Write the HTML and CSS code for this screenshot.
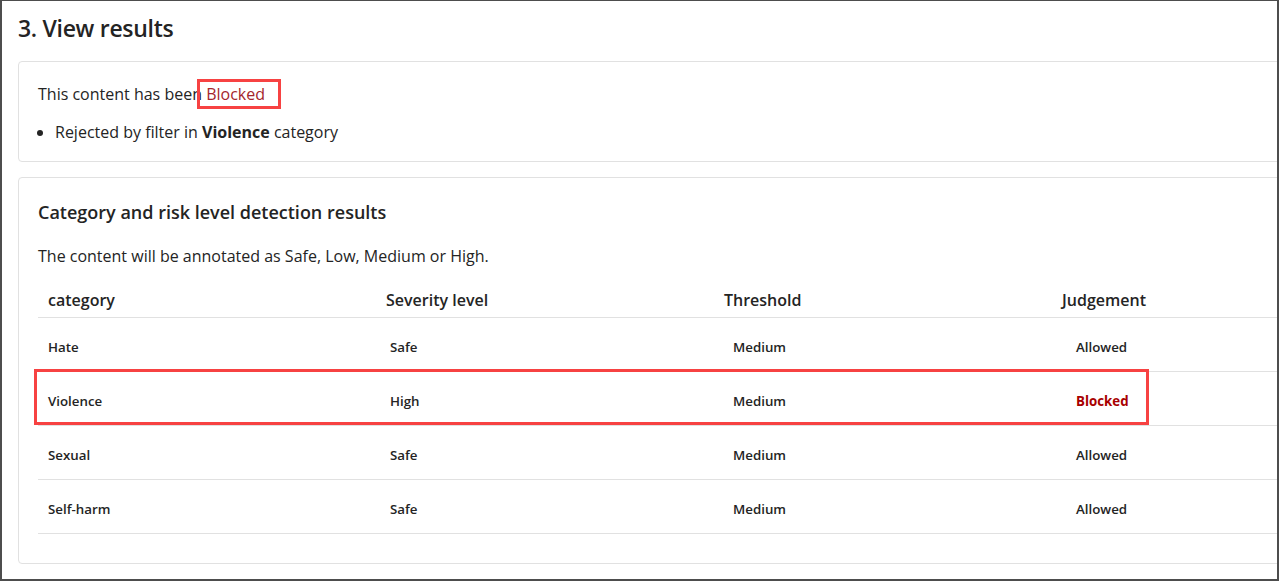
FILE: index.html
```html
<!DOCTYPE html>
<html lang="en">
<head>
<meta charset="utf-8">
<title>View results</title>
<link rel="stylesheet" href="styles.css">
</head>
<body>
<div class="frame">
  <h1 class="title">3. View results</h1>
  <section class="card card-status">
    <p class="status-line">This content has been <span class="blocked-word">Blocked</span><span class="mark mark-word"></span></p>
    <ul class="reasons">
      <li>Rejected by filter in <strong>Violence</strong> category</li>
    </ul>
  </section>
  <section class="card card-results">
    <h2 class="subtitle">Category and risk level detection results</h2>
    <p class="desc">The content will be annotated as Safe, Low, Medium or High.</p>
    <div class="table-wrap">
      <table class="results">
        <thead>
          <tr>
            <th class="c1">category</th>
            <th class="c2">Severity level</th>
            <th class="c3">Threshold</th>
            <th class="c4">Judgement</th>
          </tr>
        </thead>
        <tbody>
          <tr><td class="c1">Hate</td><td class="c2">Safe</td><td class="c3">Medium</td><td class="c4">Allowed</td></tr>
          <tr><td class="c1">Violence</td><td class="c2">High</td><td class="c3">Medium</td><td class="c4 red">Blocked</td></tr>
          <tr><td class="c1">Sexual</td><td class="c2">Safe</td><td class="c3">Medium</td><td class="c4">Allowed</td></tr>
          <tr><td class="c1">Self-harm</td><td class="c2">Safe</td><td class="c3">Medium</td><td class="c4">Allowed</td></tr>
        </tbody>
      </table>
      <div class="mark mark-row"></div>
    </div>
  </section>
</div>
</body>
</html>
```
FILE: styles.css
```css
html, body {
  margin: 0;
  padding: 0;
  background: #ffffff;
}
body {
  font-family: "Open Sans", "Noto Sans", "Liberation Sans", sans-serif;
  color: #242424;
}
.frame {
  box-sizing: border-box;
  width: 1279px;
  height: 581px;
  overflow: hidden;
  border-style: solid;
  border-color: #4d4d4d;
  border-width: 1px 2px 2px 2px;
  padding: 11px 0 0 16px;
  background: #fff;
}
.title {
  margin: 0;
  font-size: 23px;
  line-height: 32px;
  font-weight: 600;
  letter-spacing: -0.3px;
}
.card {
  box-sizing: border-box;
  width: 1400px;
  border: 1px solid #e1e1e1;
  border-radius: 4px;
  background: #fff;
}
.card-status {
  margin-top: 17px;
  padding: 20px 19px 17px;
}
.status-line {
  position: relative;
  margin: 0;
  font-size: 16px;
  line-height: 24px;
}
.blocked-word {
  color: #a4262c;
}
.mark {
  position: absolute;
  box-sizing: border-box;
  border: 3px solid #f74242;
}
.mark-word {
  left: 159px;
  top: -3px;
  width: 84px;
  height: 30px;
}
.reasons {
  margin: 14px 0 0;
  padding-left: 17px;
  font-size: 16px;
  line-height: 24px;
}
.reasons strong {
  font-weight: 700;
}
.card-results {
  margin-top: 15px;
  padding: 22px 19px 29px;
}
.subtitle {
  margin: 0;
  font-size: 18px;
  line-height: 24px;
  font-weight: 600;
}
.desc {
  margin: 20px 0 0;
  font-size: 16px;
  line-height: 24px;
}
.table-wrap {
  position: relative;
  margin-top: 12px;
}
.results {
  width: 1360px;
  border-collapse: collapse;
  table-layout: fixed;
}
.results th {
  text-align: left;
  font-size: 16px;
  font-weight: 600;
  line-height: 24px;
  padding: 8px 0 5px 10px;
  border-bottom: 1px solid #e1e1e1;
}
.results th.c1, .results th.c2, .results th.c3 { width: 328px; }
.results td {
  font-size: 13.3px;
  font-weight: 600;
  line-height: 24px;
  padding: 17px 0 12px;
  border-bottom: 1px solid #e1e1e1;
}
.results td.c1 { padding-left: 10px; }
.results td.c2 { padding-left: 14px; }
.results td.c3 { padding-left: 19px; }
.results td.c4 { padding-left: 24px; }
.results td.red {
  color: #a80000;
  font-weight: 700;
}
.mark-row {
  left: -4px;
  top: 89px;
  width: 1115px;
  height: 56px;
}
```
